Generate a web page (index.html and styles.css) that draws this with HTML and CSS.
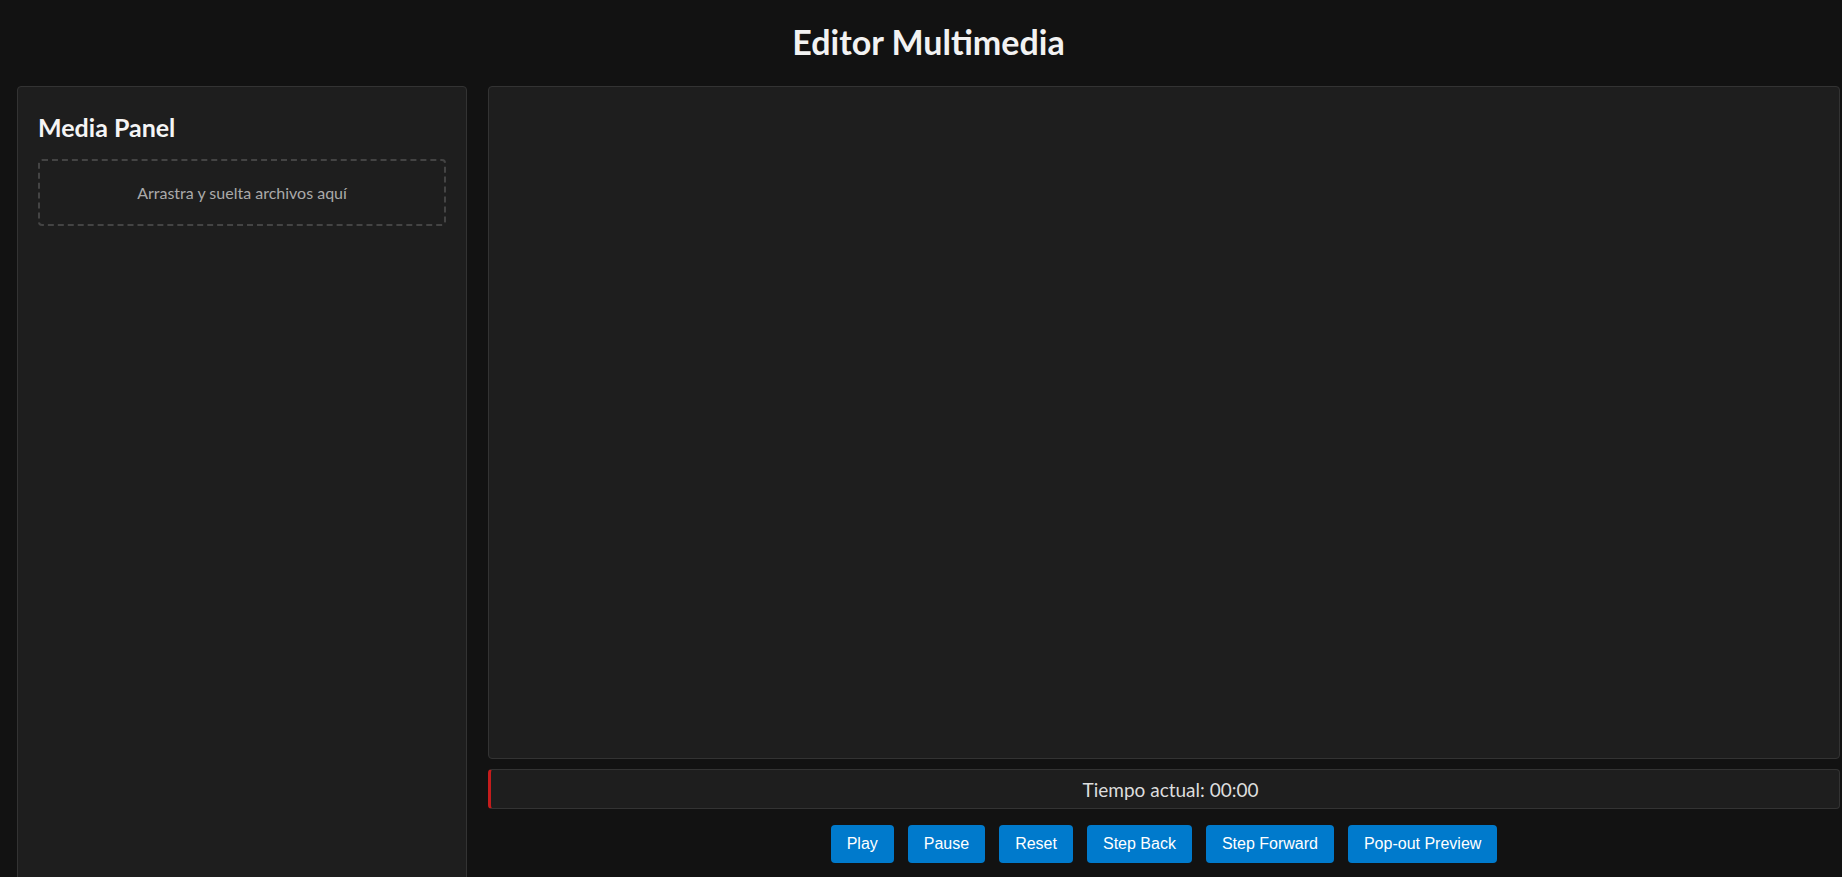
FILE: index.html
```html
<!DOCTYPE html>
<html lang="es">
<head>
<meta charset="utf-8">
<title>Editor Multimedia</title>
<link rel="stylesheet" href="styles.css">
</head>
<body>
<div class="app">
  <header class="app-header">
    <h1 class="app-title">Editor Multimedia</h1>
  </header>
  <main class="workspace">
    <aside class="media-panel">
      <h2 class="panel-title">Media Panel</h2>
      <div class="drop-zone">Arrastra y suelta archivos aquí</div>
    </aside>
    <section class="editor">
      <div class="preview"></div>
      <div class="time-bar">Tiempo actual: 00:00</div>
      <div class="controls">
        <button class="btn">Play</button>
        <button class="btn">Pause</button>
        <button class="btn">Reset</button>
        <button class="btn">Step Back</button>
        <button class="btn">Step Forward</button>
        <button class="btn">Pop-out Preview</button>
      </div>
    </section>
  </main>
</div>
</body>
</html>
```

FILE: styles.css
```css
html, body {
  margin: 0;
  padding: 0;
  background: #121212;
  overflow: hidden;
}
body {
  font-family: Lato, "Open Sans", sans-serif;
  color: #eeeeee;
}
.app {
  padding: 0 2px 0 17px;
}
.app-header {
  padding: 22px 0 25px;
  text-align: center;
}
.app-title {
  margin: 0;
  font-size: 34px;
  line-height: 39px;
  font-weight: 700;
  color: #f2f2f2;
}
.workspace {
  display: flex;
  gap: 21px;
  align-items: flex-start;
}
.media-panel {
  box-sizing: border-box;
  width: 450px;
  flex: 0 0 450px;
  min-height: 860px;
  background: #1e1e1e;
  border: 1px solid #333333;
  border-radius: 4px;
  padding: 20px;
}
.panel-title {
  margin: 5px 0 17px;
  font-size: 25px;
  line-height: 30px;
  font-weight: 700;
  color: #f5f5f5;
}
.drop-zone {
  border: 2px dashed #444444;
  border-radius: 4px;
  padding: 22px 10px;
  text-align: center;
  font-size: 16px;
  line-height: 19px;
  color: #aaaaaa;
}
.editor {
  flex: 1;
  display: flex;
  flex-direction: column;
  min-width: 0;
}
.preview {
  box-sizing: border-box;
  height: 673px;
  background: #1e1e1e;
  border: 1px solid #333333;
  border-radius: 4px;
}
.time-bar {
  box-sizing: border-box;
  margin-top: 10px;
  height: 40px;
  padding-left: 11px;
  background: #1e1e1e;
  border: 1px solid #333333;
  border-left: 3px solid #c41c1c;
  border-radius: 4px;
  display: flex;
  align-items: center;
  justify-content: center;
  font-size: 19px;
  color: #dddddd;
}
.controls {
  margin-top: 16px;
  display: flex;
  justify-content: center;
  gap: 14px;
}
.btn {
  font-family: "Liberation Sans", Arial, sans-serif;
  font-size: 16px;
  line-height: 18px;
  padding: 10px 16px;
  background: #007acc;
  color: #ffffff;
  border: none;
  border-radius: 4px;
  cursor: pointer;
}
```
